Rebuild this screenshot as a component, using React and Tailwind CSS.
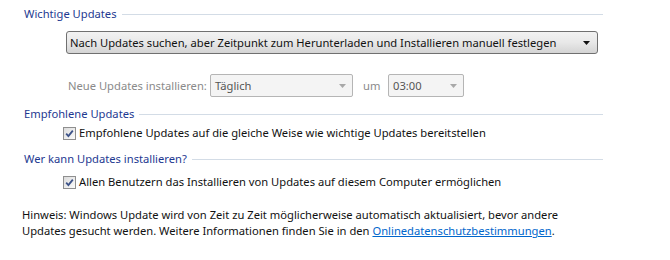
import React from 'react';

const Header = ({ children, className = '' }) => (
    <div className={`flex items-center h-[16px] pl-[24px] w-[603px] ${className}`}>
        <span className="text-[#1e3991] whitespace-nowrap">{children}</span>
        <div className="flex-1 h-px bg-[#d3dce6] ml-[5px]" />
    </div>
);

const Arrow = ({ color }) => (
    <svg width="7" height="4" viewBox="0 0 7 4">
        <path d="M0 0 L7 0 L3.5 4 Z" fill={color} />
    </svg>
);

const Checkbox = () => (
    <div className="w-[13px] h-[13px] border border-[#8f8f8f] bg-gradient-to-br from-[#dcdcdc] to-[#fbfbfb] flex items-center justify-center shrink-0">
        <svg width="9" height="9" viewBox="0 0 9 9">
            <path d="M1.2 4.6 L3.4 7 L7.8 1.6" fill="none" stroke="#3c5288" strokeWidth="1.8" />
        </svg>
    </div>
);

const CheckRow = ({ children, className = '' }) => (
    <div className={`flex items-center h-[16px] pl-[63px] gap-[3px] ${className}`}>
        <Checkbox />
        <span className="whitespace-nowrap">{children}</span>
    </div>
);

const App = () => {
    return (
        <div className="w-[670px] h-[260px] bg-white text-[11.2px] leading-[16px] text-[#111] font-['Noto_Sans',sans-serif] pt-[6px] overflow-hidden">
            {/* Wichtige Updates */}
            <Header>Wichtige Updates</Header>

            <div className="mt-[9px] ml-[66px] w-[532px] h-[23px] rounded-[3px] border border-[#707070] bg-gradient-to-b from-[#f2f2f2] via-[#e8e8e8] to-[#d4d4d4] flex items-center justify-between pl-[3px] pr-[7px]">
                <span className="whitespace-nowrap">Nach Updates suchen, aber Zeitpunkt zum Herunterladen und Installieren manuell festlegen</span>
                <Arrow color="#111" />
            </div>

            <div className="mt-[20px] h-[23px] flex items-center pl-[68px] text-[#8a8a8a]">
                <span className="w-[142px] whitespace-nowrap">Neue Updates installieren:</span>
                <div className="w-[143px] h-[23px] rounded-[2px] border border-[#b5b5b5] bg-[#f4f4f4] flex items-center justify-between pl-[4px] pr-[6px] text-[#555]">
                    <span>Täglich</span>
                    <Arrow color="#a8a8a8" />
                </div>
                <span className="ml-[10px] w-[25px]">um</span>
                <div className="w-[76px] h-[23px] rounded-[2px] border border-[#b5b5b5] bg-[#f4f4f4] flex items-center justify-between pl-[4px] pr-[6px] text-[#555]">
                    <span>03:00</span>
                    <Arrow color="#a8a8a8" />
                </div>
            </div>

            {/* Empfohlene Updates */}
            <Header className="mt-[9px]">Empfohlene Updates</Header>
            <CheckRow className="mt-[3px]">Empfohlene Updates auf die gleiche Weise wie wichtige Updates bereitstellen</CheckRow>

            {/* Wer kann Updates installieren? */}
            <Header className="mt-[10px]">Wer kann Updates installieren?</Header>
            <CheckRow className="mt-[7px]">Allen Benutzern das Installieren von Updates auf diesem Computer ermöglichen</CheckRow>

            <p className="mt-[17px] pl-[22px] w-[600px]">
                Hinweis: Windows Update wird von Zeit zu Zeit möglicherweise automatisch aktualisiert, bevor andere<br />
                Updates gesucht werden. Weitere Informationen finden Sie in den{' '}
                <a href="#" className="text-[#0066cc] underline">Onlinedatenschutzbestimmungen</a>.
            </p>
        </div>
    );
};

export default App;
